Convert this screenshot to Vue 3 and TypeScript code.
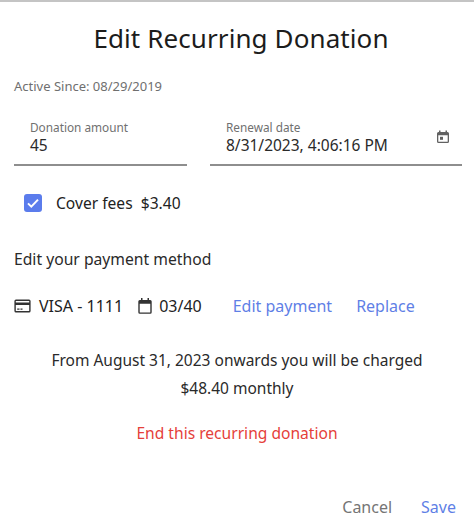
<script setup lang="ts">
const activeSince = '08/29/2019'
const amount = '45'
const renewal = '8/31/2023, 4:06:16 PM'
</script>

<template>
  <div class="dialog">
    <div class="top-strip"></div>
    <h1 class="title">Edit Recurring Donation</h1>
    <p class="since">Active Since: {{ activeSince }}</p>

    <div class="fields">
      <div class="field amount">
        <span class="label">Donation amount</span>
        <span class="value">{{ amount }}</span>
      </div>
      <div class="field renewal">
        <span class="label">Renewal date</span>
        <span class="value">{{ renewal }}</span>
        <svg class="date-icon" width="14" height="14" viewBox="0 0 14 14">
          <path fill="#616161" d="M3 0.5h1.5V2h5V0.5H11V2h.5A1.5 1.5 0 0 1 13 3.5v8a1.5 1.5 0 0 1-1.5 1.5h-9A1.5 1.5 0 0 1 1 11.5v-8A1.5 1.5 0 0 1 2.5 2H3zM2.3 5.2v6.3c0 .1.1.2.2.2h9c.1 0 .2-.1.2-.2V5.2z" />
          <rect x="4" y="6.8" width="3" height="3" fill="#616161" />
        </svg>
      </div>
    </div>

    <label class="fees">
      <span class="checkbox">
        <svg width="18" height="18" viewBox="0 0 18 18">
          <path d="M4 9.400l3.300 3.200L14 5.600" fill="none" stroke="#fff" stroke-width="2" />
        </svg>
      </span>
      <span>Cover fees&nbsp; $3.40</span>
    </label>

    <h2 class="subhead">Edit your payment method</h2>

    <div class="payment">
      <svg class="pay-icon" width="17" height="14" viewBox="0 0 17 14">
        <path fill="#333" d="M2 .5h13A1.600 1.600 0 0 1 16.600 2v10a1.600 1.600 0 0 1-1.600 1.500H2A1.600 1.600 0 0 1 .4 12V2A1.600 1.600 0 0 1 2 .5zm-.2 1.400v1.700h13.400V1.900zm0 4v6.200h13.400V5.900zM3.200 9.600h2.300v1.100H3.200zm3.300 0h2v1.100h-2z" />
      </svg>
      <span class="card">VISA - 1111</span>
      <svg class="pay-icon cal" width="14" height="16" viewBox="0 0 14 16">
        <path fill="#333" d="M3 0h1.500v2h5V0H11v2h1.200A1.500 1.500 0 0 1 13.700 3.500v10.800a1.500 1.500 0 0 1-1.500 1.500H1.800A1.500 1.500 0 0 1 .3 14.300V3.500A1.500 1.500 0 0 1 1.800 2H3zM1.700 5.800v8.500c0 .1 0 .1.100.1h10.400c.1 0 .1 0 .1-.1V5.800z" />
      </svg>
      <span class="expiry">03/40</span>
      <a class="link edit">Edit payment</a>
      <a class="link">Replace</a>
    </div>

    <div class="summary">
      <p>From August 31, 2023 onwards you will be charged</p>
      <p>$48.40 monthly</p>
    </div>

    <a class="end">End this recurring donation</a>

    <div class="actions">
      <button class="btn cancel">Cancel</button>
      <button class="btn save">Save</button>
    </div>
  </div>
</template>

<style scoped>
.dialog {
  width: 474px;
  height: 525px;
  overflow: hidden;
  background: #fff;
  color: #222;
  font-family: "Noto Sans", sans-serif;
  box-sizing: border-box;
}

.top-strip {
  height: 2px;
  background: #c4c4c4;
}

.title {
  margin: 19px 0 0;
  padding-left: 8px;
  font-size: 26px;
  line-height: 34px;
  font-weight: 400;
  letter-spacing: 0.1px;
  text-align: center;
  color: #1c1c1c;
}

.since {
  margin: 23px 0 0 14px;
  font-size: 13px;
  line-height: 17px;
  color: #6f6f6f;
}

.fields {
  display: flex;
  gap: 23px;
  margin: 24px 12px 0 14px;
}

.field {
  position: relative;
  display: flex;
  flex-direction: column;
  height: 47px;
  box-sizing: border-box;
  padding: 0 0 0 16px;
  border-bottom: 2px solid #8e8e8e;
}

.amount {
  width: 173px;
}

.renewal {
  flex: 1;
}

.label {
  font-size: 11.800px;
  line-height: 16px;
  color: #707070;
}

.value {
  font-size: 15.500px;
  line-height: 20px;
  color: #2a2a2a;
}

.date-icon {
  position: absolute;
  top: 11px;
  right: 12px;
}

.fees {
  display: flex;
  align-items: center;
  gap: 14px;
  margin: 26px 0 0 24px;
  font-size: 15.600px;
  line-height: 22px;
}

.checkbox {
  display: flex;
  width: 18px;
  height: 18px;
  border-radius: 3px;
  background: #5b7cec;
}

.subhead {
  margin: 34px 0 0 14px;
  font-size: 15.700px;
  line-height: 22px;
  font-weight: 400;
  color: #2a2a2a;
}

.payment {
  display: flex;
  align-items: center;
  margin: 25px 0 0 14px;
  height: 22px;
  font-size: 16px;
}

.card {
  margin-left: 8px;
}

.cal {
  margin-left: 15px;
}

.expiry {
  margin-left: 7px;
}

.link {
  color: #5f7fe6;
}

.edit {
  margin-left: 31px;
  margin-right: 24px;
}

.summary {
  margin-top: 30px;
  text-align: center;
  font-size: 15.500px;
  line-height: 27.500px;
  color: #2a2a2a;
}

.summary p {
  margin: 0;
}

.end {
  display: block;
  margin-top: 20px;
  text-align: center;
  font-size: 15.600px;
  line-height: 22px;
  color: #e5403a;
}

.actions {
  display: flex;
  justify-content: flex-end;
  gap: 29px;
  margin: 52px 18px 0 0;
}

.btn {
  padding: 0;
  border: none;
  background: none;
  font-family: inherit;
  font-size: 16px;
  line-height: 22px;
}

.cancel {
  color: #757575;
}

.save {
  color: #5f7fe6;
}
</style>
